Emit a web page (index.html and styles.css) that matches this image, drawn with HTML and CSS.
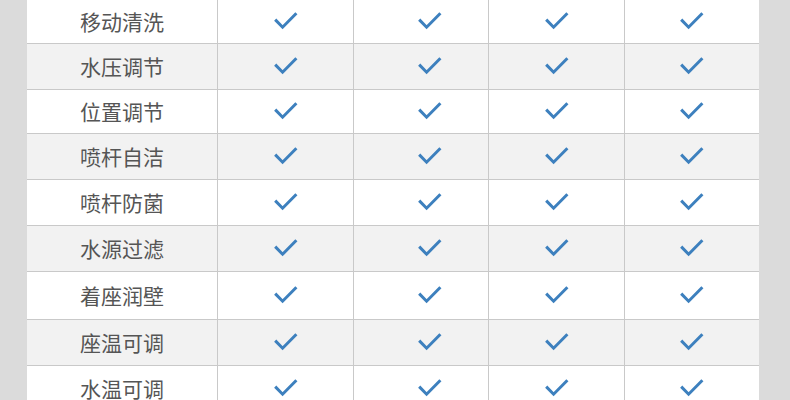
FILE: index.html
```html
<!DOCTYPE html>
<html lang="zh-CN">
<head>
<meta charset="utf-8">
<link rel="stylesheet" href="styles.css">
</head>
<body>
<div class="table">
  <div class="row"><div class="cell name">移动清洗</div><div class="cell"><svg class="chk" viewBox="0 0 24 19"><path d="M1.2 7.6 L8.6 15.2 L22.4 1.2"/></svg></div><div class="cell shift"><svg class="chk" viewBox="0 0 24 19"><path d="M1.2 7.6 L8.6 15.2 L22.4 1.2"/></svg></div><div class="cell"><svg class="chk" viewBox="0 0 24 19"><path d="M1.2 7.6 L8.6 15.2 L22.4 1.2"/></svg></div><div class="cell"><svg class="chk" viewBox="0 0 24 19"><path d="M1.2 7.6 L8.6 15.2 L22.4 1.2"/></svg></div></div>
  <div class="row alt"><div class="cell name">水压调节</div><div class="cell"><svg class="chk" viewBox="0 0 24 19"><path d="M1.2 7.6 L8.6 15.2 L22.4 1.2"/></svg></div><div class="cell shift"><svg class="chk" viewBox="0 0 24 19"><path d="M1.2 7.6 L8.6 15.2 L22.4 1.2"/></svg></div><div class="cell"><svg class="chk" viewBox="0 0 24 19"><path d="M1.2 7.6 L8.6 15.2 L22.4 1.2"/></svg></div><div class="cell"><svg class="chk" viewBox="0 0 24 19"><path d="M1.2 7.6 L8.6 15.2 L22.4 1.2"/></svg></div></div>
  <div class="row"><div class="cell name">位置调节</div><div class="cell"><svg class="chk" viewBox="0 0 24 19"><path d="M1.2 7.6 L8.6 15.2 L22.4 1.2"/></svg></div><div class="cell shift"><svg class="chk" viewBox="0 0 24 19"><path d="M1.2 7.6 L8.6 15.2 L22.4 1.2"/></svg></div><div class="cell"><svg class="chk" viewBox="0 0 24 19"><path d="M1.2 7.6 L8.6 15.2 L22.4 1.2"/></svg></div><div class="cell"><svg class="chk" viewBox="0 0 24 19"><path d="M1.2 7.6 L8.6 15.2 L22.4 1.2"/></svg></div></div>
  <div class="row alt"><div class="cell name">喷杆自洁</div><div class="cell"><svg class="chk" viewBox="0 0 24 19"><path d="M1.2 7.6 L8.6 15.2 L22.4 1.2"/></svg></div><div class="cell shift"><svg class="chk" viewBox="0 0 24 19"><path d="M1.2 7.6 L8.6 15.2 L22.4 1.2"/></svg></div><div class="cell"><svg class="chk" viewBox="0 0 24 19"><path d="M1.2 7.6 L8.6 15.2 L22.4 1.2"/></svg></div><div class="cell"><svg class="chk" viewBox="0 0 24 19"><path d="M1.2 7.6 L8.6 15.2 L22.4 1.2"/></svg></div></div>
  <div class="row"><div class="cell name">喷杆防菌</div><div class="cell"><svg class="chk" viewBox="0 0 24 19"><path d="M1.2 7.6 L8.6 15.2 L22.4 1.2"/></svg></div><div class="cell shift"><svg class="chk" viewBox="0 0 24 19"><path d="M1.2 7.6 L8.6 15.2 L22.4 1.2"/></svg></div><div class="cell"><svg class="chk" viewBox="0 0 24 19"><path d="M1.2 7.6 L8.6 15.2 L22.4 1.2"/></svg></div><div class="cell"><svg class="chk" viewBox="0 0 24 19"><path d="M1.2 7.6 L8.6 15.2 L22.4 1.2"/></svg></div></div>
  <div class="row alt"><div class="cell name">水源过滤</div><div class="cell"><svg class="chk" viewBox="0 0 24 19"><path d="M1.2 7.6 L8.6 15.2 L22.4 1.2"/></svg></div><div class="cell shift"><svg class="chk" viewBox="0 0 24 19"><path d="M1.2 7.6 L8.6 15.2 L22.4 1.2"/></svg></div><div class="cell"><svg class="chk" viewBox="0 0 24 19"><path d="M1.2 7.6 L8.6 15.2 L22.4 1.2"/></svg></div><div class="cell"><svg class="chk" viewBox="0 0 24 19"><path d="M1.2 7.6 L8.6 15.2 L22.4 1.2"/></svg></div></div>
  <div class="row"><div class="cell name">着座润壁</div><div class="cell"><svg class="chk" viewBox="0 0 24 19"><path d="M1.2 7.6 L8.6 15.2 L22.4 1.2"/></svg></div><div class="cell shift"><svg class="chk" viewBox="0 0 24 19"><path d="M1.2 7.6 L8.6 15.2 L22.4 1.2"/></svg></div><div class="cell"><svg class="chk" viewBox="0 0 24 19"><path d="M1.2 7.6 L8.6 15.2 L22.4 1.2"/></svg></div><div class="cell"><svg class="chk" viewBox="0 0 24 19"><path d="M1.2 7.6 L8.6 15.2 L22.4 1.2"/></svg></div></div>
  <div class="row alt"><div class="cell name">座温可调</div><div class="cell"><svg class="chk" viewBox="0 0 24 19"><path d="M1.2 7.6 L8.6 15.2 L22.4 1.2"/></svg></div><div class="cell shift"><svg class="chk" viewBox="0 0 24 19"><path d="M1.2 7.6 L8.6 15.2 L22.4 1.2"/></svg></div><div class="cell"><svg class="chk" viewBox="0 0 24 19"><path d="M1.2 7.6 L8.6 15.2 L22.4 1.2"/></svg></div><div class="cell"><svg class="chk" viewBox="0 0 24 19"><path d="M1.2 7.6 L8.6 15.2 L22.4 1.2"/></svg></div></div>
  <div class="row"><div class="cell name">水温可调</div><div class="cell"><svg class="chk" viewBox="0 0 24 19"><path d="M1.2 7.6 L8.6 15.2 L22.4 1.2"/></svg></div><div class="cell shift"><svg class="chk" viewBox="0 0 24 19"><path d="M1.2 7.6 L8.6 15.2 L22.4 1.2"/></svg></div><div class="cell"><svg class="chk" viewBox="0 0 24 19"><path d="M1.2 7.6 L8.6 15.2 L22.4 1.2"/></svg></div><div class="cell"><svg class="chk" viewBox="0 0 24 19"><path d="M1.2 7.6 L8.6 15.2 L22.4 1.2"/></svg></div></div>
</div>
</body>
</html>
```

FILE: styles.css
```css
html, body {
  margin: 0;
  padding: 0;
  background: #dbdbdb;
  overflow: hidden;
}
.table {
  margin-left: 27px;
  width: 732px;
  background: #ffffff;
  font-family: "Noto Sans CJK SC", "Noto Sans", sans-serif;
}
.row {
  display: grid;
  grid-template-columns: 191px 136px 135px 136px 134px;
  height: 46px;
  box-sizing: border-box;
  border-bottom: 1px solid #c9c9c9;
  background: #ffffff;
}
.row.alt {
  background: #f2f2f2;
}
.row:nth-child(1),
.row:nth-child(3) {
  height: 44px;
}
.row:nth-child(7) {
  height: 48px;
}
.cell {
  display: flex;
  align-items: center;
  justify-content: center;
  border-right: 1px solid #c9c9c9;
}
.cell:last-child {
  border-right: none;
}
.cell.shift {
  padding-left: 18px;
}
.name {
  font-size: 21px;
  color: #555555;
  letter-spacing: 0;
  padding-bottom: 1px;
}
.chk {
  width: 24px;
  height: 19px;
  fill: none;
  stroke: #3d80be;
  stroke-width: 3;
  stroke-linecap: butt;
  stroke-linejoin: miter;
}
```
